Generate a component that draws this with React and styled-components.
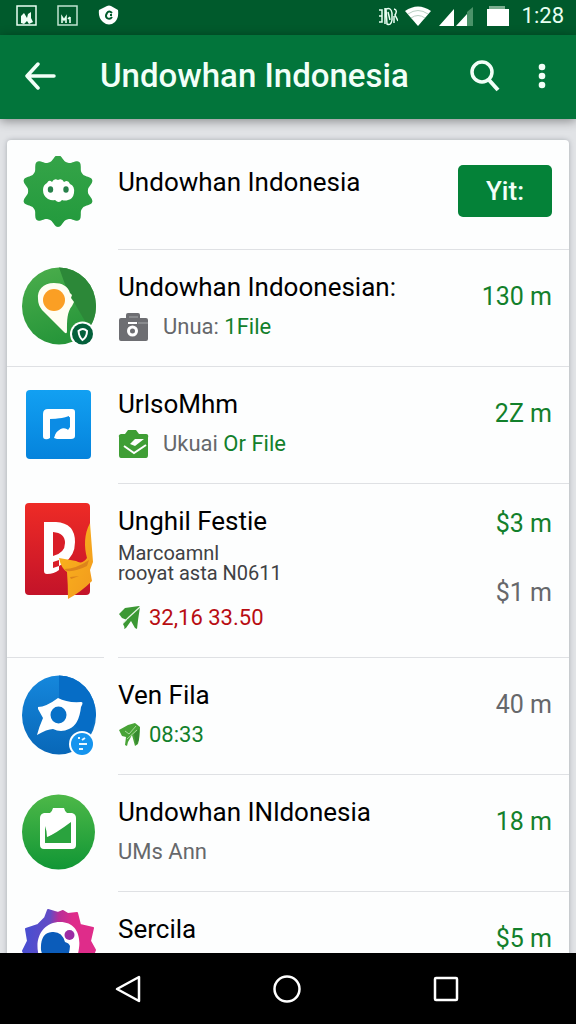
import React from 'react';
import styled, { createGlobalStyle } from 'styled-components';

const colors = {
  green: '#12802b',
  red: '#b80d12',
  gray: '#66686b',
  dark: '#3f4144',
};

// builds the outline of a cog with soft teeth
const gearPath = (cx, cy, rx, ry, depth, teeth) => {
  const points = [];
  for (let i = 0; i < 240; i++) {
    const a = (i / 240) * Math.PI * 2 - Math.PI / 2;
    const wave = Math.cos(a * teeth + (Math.PI / 2) * teeth);
    const k = 1 - depth * (1 - Math.pow((1 + wave) / 2, 1.4));
    points.push(
      `${(cx + rx * k * Math.cos(a)).toFixed(1)} ${(cy + ry * k * Math.sin(a)).toFixed(1)}`
    );
  }
  return `M${points.join('L')}Z`;
};

const GearIcon = () => (
  <AppIcon viewBox="0 0 80 100" aria-hidden="true">
    <defs>
      <linearGradient id="gear" x1="0" y1="0" x2="0" y2="1">
        <stop offset="0" stopColor="#35a448" />
        <stop offset="1" stopColor="#239a3d" />
      </linearGradient>
    </defs>
    <path d={gearPath(39, 35, 36, 36, 0.17, 10)} fill="url(#gear)" />
    <path
      d="M28 27 Q30 23 33 26 Q35 22 39 24 Q43 22 45 26 Q49 23 51 28 Q56 30 55 37 Q54 43 49 44 Q46 45 43 44 Q40 48 36 44 Q33 45 29 43 Q24 40 24 34 Q24 29 28 27Z"
      fill="#fff"
    />
    <ellipse cx="31.500" cy="33.500" rx="2.700" ry="3.300" fill="#27804a" />
    <ellipse cx="47" cy="33.500" rx="2.700" ry="3.300" fill="#27804a" />
  </AppIcon>
);

const PinIcon = () => (
  <AppIcon viewBox="0 0 80 100" aria-hidden="true">
    <defs>
      <linearGradient id="pin" x1="0" y1="0" x2="0.300" y2="1">
        <stop offset="0" stopColor="#4cae4c" />
        <stop offset="1" stopColor="#27963a" />
      </linearGradient>
    </defs>
    <ellipse cx="40" cy="40" rx="37" ry="38.500" fill="url(#pin)" />
    <path d="M40 1.500 A37 38.500 0 0 1 77 40 Q77 53 70 62 L48 24Z" fill="#2c8838" />
    <path
      d="M19 33 C18 24 24 17 35 17 C43 17 49 20 51 27 L53 29 L52 32 L55 36 L53 40 C48 46 48 54 48 65 Q48 69 45 66 L23 44 Q19 39 19 33Z"
      fill="#fffef2"
    />
    <circle cx="35" cy="34" r="11" fill="#fb9f24" />
    <circle cx="63.500" cy="68" r="12.500" fill="#fff" />
    <circle cx="63.500" cy="68" r="10.500" fill="#04603b" />
    <path
      d="M59.500 65 Q64 61 68 65 Q68 71 63.500 74 Q60 71 59.500 65Z"
      fill="none"
      stroke="#fff"
      strokeWidth="2"
    />
  </AppIcon>
);

const MusicIcon = () => (
  <AppIcon viewBox="0 0 80 100" aria-hidden="true">
    <defs>
      <linearGradient id="music" x1="0" y1="0" x2="0" y2="1">
        <stop offset="0" stopColor="#12a0f2" />
        <stop offset="1" stopColor="#0583dc" />
      </linearGradient>
    </defs>
    <rect x="7" y="7" width="65" height="69" rx="4" fill="url(#music)" />
    <path
      d="M29 26 H53 Q56 26 56 29 V53 Q56 56 52 56 H38 L35 55 Q37 47 43 45 Q47 44 49 47 L51 44 V34 Q43 36 31 36 L31 55 Q28 57 26 56 Q24 56 24 53 V31 Q24 26 29 26Z"
      fill="#fff"
    />
    <path d="M31 36 Q43 36 50 33 V44 L48 46 Q42 43 36 51 L34 55 H31Z" fill="#0b8ce5" />
  </AppIcon>
);

const CardIcon = () => (
  <AppIcon viewBox="0 0 80 100" aria-hidden="true">
    <defs>
      <linearGradient id="card" x1="0" y1="0" x2="0" y2="1">
        <stop offset="0" stopColor="#ee2b26" />
        <stop offset="1" stopColor="#c31329" />
      </linearGradient>
      <linearGradient id="cloth" x1="0" y1="0" x2="1" y2="1">
        <stop offset="0" stopColor="#fbb71d" />
        <stop offset="1" stopColor="#f29a1d" />
      </linearGradient>
    </defs>
    <rect x="6" y="3" width="65" height="92" rx="4" fill="url(#card)" />
    <path
      d="M25 22 H37 Q56 23 56 42 Q56 56 45 63 L40 66 V70 Q35 74 28 74 Q25 74 25 71Z"
      fill="#fff"
    />
    <path d="M34 32 Q46 33 46 43 Q46 53 34 56Z M34 62 L40 60 V66 L34 68Z" fill="#d91e28" />
    <path
      d="M71 23 C65 34 65 47 68 58 Q63 65 57 61 L40 58 Q42 68 48 72 Q49 85 49 99 Q62 92 73 81 L71 70 L74 62 Z"
      fill="url(#cloth)"
    />
    <path
      d="M45 69 Q57 69 70 60 L68 66 Q56 72 48 71Z M51 77 L60 76 L52 79Z"
      fill="#dd841b"
    />
  </AppIcon>
);

const StarIcon = () => (
  <AppIcon viewBox="0 0 80 100" aria-hidden="true">
    <defs>
      <linearGradient id="star" x1="0" y1="0" x2="0" y2="1">
        <stop offset="0" stopColor="#1587dc" />
        <stop offset="1" stopColor="#0867b8" />
      </linearGradient>
    </defs>
    <ellipse cx="40" cy="41" rx="37" ry="39.500" fill="url(#star)" />
    <path d="M40 1.500 A37 39.500 0 0 1 77 41 L70 62 L40 41Z" fill="#066dc6" />
    <path
      d="M19 33 Q27 33 39 24 Q48 29 62 28 Q65 28 62 33 Q60 51 50 55 Q42 59 34 55 Q28 55 18 61 Q20 53 24 44 L19 35Z"
      fill="#fff"
    />
    <ellipse cx="39.500" cy="41" rx="8" ry="8.500" fill="#0871c8" />
    <circle cx="63" cy="70" r="13" fill="#fff" />
    <circle cx="63" cy="70" r="11" fill="#1594ee" />
    <path
      d="M59 64 h2 m2 2 l3 -2 M60 70 h8 M60 75 h4"
      stroke="#e9f7ff"
      strokeWidth="2"
      fill="none"
    />
  </AppIcon>
);

const ClipboardIcon = () => (
  <AppIcon viewBox="0 0 80 100" aria-hidden="true">
    <defs>
      <linearGradient id="clip" x1="0" y1="0" x2="0" y2="1">
        <stop offset="0" stopColor="#4db848" />
        <stop offset="1" stopColor="#119635" />
      </linearGradient>
    </defs>
    <ellipse cx="39.500" cy="41" rx="36.500" ry="37.500" fill="url(#clip)" />
    <path
      d="M31 22 Q33 21 34 17 H45 Q46 21 48 22 H53 Q57 23 57 27 V54 Q57 58 53 58 H25 Q21 58 21 54 V27 Q21 23 25 22Z"
      fill="#fff"
    />
    <path d="M26 35 Q28 40 28 46 Q36 43 52 31 V52 H26Z" fill="#2aa33e" />
    <path d="M27 36 Q30 46 28 46 L38 40 L30 32Z" fill="#fff" />
  </AppIcon>
);

const OrbitIcon = () => (
  <AppIcon viewBox="0 0 80 100" aria-hidden="true">
    <defs>
      <linearGradient id="orbit" x1="0" y1="0" x2="1" y2="0.100">
        <stop offset="0.100" stopColor="#4b4ed0" />
        <stop offset="0.380" stopColor="#634bc5" />
        <stop offset="0.500" stopColor="#b72e98" />
        <stop offset="0.700" stopColor="#df2c8a" />
      </linearGradient>
    </defs>
    <path
      d="M29 2 L39 5 L44 3 L49 6 L58 5 L61 17 L74 20 L71 33 L76 42 L73 50 L74 65 L61 66 L56 78 L45 74 L36 80 L28 74 L17 75 L15 65 L5 62 L8 51 L4 43 L9 33 L7 21 L19 17 L26 10Z"
      fill="url(#orbit)"
      stroke="url(#orbit)"
      strokeWidth="2"
      strokeLinejoin="round"
    />
    <path
      d="M19 44 C16 27 26 14 41 14 C56 14 62 26 60 40 C58 57 49 64 38 63 C26 62 20 54 19 44Z"
      fill="#fff"
    />
    <path
      d="M22 42 Q21 25 33 24 Q43 23 46 34 Q50 35 51 38 Q50 55 38 57 Q25 56 22 42Z"
      fill="#0b5cba"
    />
    <circle cx="50.500" cy="27" r="5" fill="#9b2ca4" />
  </AppIcon>
);

const CaseIcon = () => (
  <SmallIcon viewBox="0 0 31 30" aria-hidden="true">
    <path
      d="M3 6 H8 V3 Q8 1 10 1 H20 Q22 1 22 3 V6 H28 Q30 6 30 8 V27 Q30 29 28 29 H3 Q1 29 1 27 V8 Q1 6 3 6Z"
      fill="#6d6e72"
    />
    <path d="M11 4 H20 V6 H11Z M20 10 H30 V12 H20Z" fill="#898b8e" />
    <path d="M10 11 H19" stroke="#fff" strokeWidth="2" />
    <circle cx="14.500" cy="19" r="4" fill="none" stroke="#fff" strokeWidth="3" />
  </SmallIcon>
);

const CheckBagIcon = () => (
  <SmallIcon viewBox="0 0 31 30" aria-hidden="true">
    <path
      d="M3 5 L7 5 L10 1 H18 L21 5 H28 Q31 5 30 9 V26 Q30 29 28 29 H3 Q1 29 1 26 V8 Q0 6 3 5Z"
      fill="#3f9e35"
    />
    <path d="M6 17 L16 24 L28 16" stroke="#fff" strokeWidth="2" fill="none" />
    <path d="M12 15 L17 10 L26 10 L17 17Z" fill="#fff" />
  </SmallIcon>
);

const PlaneIcon = () => (
  <TinyIcon viewBox="0 0 23 26" aria-hidden="true">
    <path
      d="M1 9 L7 3 L21 1 L22 2 Q20 14 19 24 L17 23 L13 16 L8 23 L6 24 L9 15 L4 13Z"
      fill="#3c9834"
    />
    <path d="M22 2 L11 12 L5 18" stroke="#e9f6e7" strokeWidth="1.200" fill="none" />
    <path d="M5 19 L10 14 L12 15 L7 23Z" fill="#3c9834" />
  </TinyIcon>
);

const ClockPlaneIcon = () => (
  <TinyIcon viewBox="0 0 23 26" aria-hidden="true">
    <path
      d="M1 8 L10 3 L17 1 L22 5 Q22 15 20 22 L17 24 L14 13 L10 20 L9 24 L7 23 L8 15 L4 14Z"
      fill="#48a337"
    />
    <path d="M7 9 L11 12 L18 4 M19 8 L9 17" stroke="#a7d99c" strokeWidth="1" fill="none" />
    <path d="M16 12 L18 23 L21 18 L21 7Z" fill="#236f2b" opacity="0.500" />
  </TinyIcon>
);

const items = [
  {
    title: 'Undowhan Indonesia',
    icon: GearIcon,
    action: 'Yit:',
    first: true,
  },
  {
    title: 'Undowhan Indoonesian:',
    icon: PinIcon,
    badge: CaseIcon,
    sub: 'Unua:',
    link: '1File',
    values: [{ text: '130 m', color: 'green' }],
    line: 'full',
  },
  {
    title: 'UrlsoMhm',
    icon: MusicIcon,
    badge: CheckBagIcon,
    sub: 'Ukuai',
    link: 'Or File',
    values: [{ text: '2Z m', color: 'green' }],
  },
  {
    title: 'Unghil Festie',
    icon: CardIcon,
    notes: ['Marcoamnl', 'rooyat asta N0611'],
    mark: PlaneIcon,
    info: '32,16 33.50',
    infoColor: 'red',
    values: [
      { text: '$3 m', color: 'green' },
      { text: '$1 m', color: 'gray' },
    ],
    line: 'split',
  },
  {
    title: 'Ven Fila',
    icon: StarIcon,
    mark: ClockPlaneIcon,
    info: '08:33',
    infoColor: 'green',
    values: [{ text: '40 m', color: 'gray' }],
  },
  {
    title: 'Undowhan INldonesia',
    icon: ClipboardIcon,
    sub: 'UMs Ann',
    values: [{ text: '18 m', color: 'green' }],
  },
  {
    title: 'Sercila',
    icon: OrbitIcon,
    mark: PlaneIcon,
    values: [{ text: '$5 m', color: 'green' }],
  },
];

const ListItem = ({ item }) => {
  const Icon = item.icon;
  const Badge = item.badge;
  const Mark = item.mark;
  return (
    <Row>
      <IconCell $line={item.line}>
        <Icon />
      </IconCell>
      <Content>
        <Texts $first={item.first}>
          <Title>{item.title}</Title>
          {item.notes && (
            <Notes>
              {item.notes.map((note) => (
                <Note key={note}>{note}</Note>
              ))}
            </Notes>
          )}
          {item.sub && (
            <SubLine $gap={14}>
              {Badge && <Badge />}
              <span>
                {item.sub} {item.link && <FileLink href="#">{item.link}</FileLink>}
              </span>
            </SubLine>
          )}
          {Mark && (
            <SubLine $gap={8} $color={item.infoColor} $afterNotes={!!item.notes}>
              <Mark />
              {item.info && <Info>{item.info}</Info>}
            </SubLine>
          )}
        </Texts>
        {item.action && <ActionButton type="button">{item.action}</ActionButton>}
        {item.values && (
          <Values $pair={item.values.length > 1}>
            {item.values.map((value) => (
              <Value key={value.text} $color={value.color}>
                {value.text}
              </Value>
            ))}
          </Values>
        )}
      </Content>
    </Row>
  );
};

const App = () => {
  return (
    <>
      <GlobalStyle />
      <Page>
        <StatusBar>
          <StatusGroup $gap={20}>
            <svg width="21" height="21" viewBox="0 0 21 21" aria-hidden="true">
              <rect x="1" y="1" width="19" height="19" fill="none" stroke="#e8fff2" strokeWidth="1.500" />
              <path d="M5 18 V11 L8 8 L11 13 L12 9 L15 7 V13 L17 17 L13 19 L11 16 L8 19Z" fill="#f2fff8" />
            </svg>
            <svg width="21" height="21" viewBox="0 0 21 21" aria-hidden="true">
              <rect x="1" y="1" width="19" height="19" fill="none" stroke="#bfe3cf" strokeWidth="1.500" />
              <path d="M5 18 V12 L7 15 L9 12 V18 M13 12 V18 M11 14 L13 12" fill="none" stroke="#e8fff2" strokeWidth="1.600" />
            </svg>
            <svg width="21" height="21" viewBox="0 0 21 21" aria-hidden="true">
              <path d="M1 5 L9 1 Q11 0 13 1 L20 5 Q21 13 17 17 Q11 22 5 17 Q0 13 1 5Z" fill="#fff" />
              <path d="M14 8 Q11 5 9 8 Q7 11 9 13 Q12 15 14 12 M12 10 H14" fill="none" stroke="#005a2b" strokeWidth="2" />
            </svg>
          </StatusGroup>
          <StatusGroup $gap={6}>
            <svg width="20" height="22" viewBox="0 0 20 22" aria-hidden="true">
              <path
                d="M1 5 H4 V17 H1 M1 11 H4 M7 3 V19 M8 4 Q13 2 14 8 V15 Q13 21 9 19Z M10 7 L12 15 M16 4 Q20 5 17 10 L20 16 M16 11 V18"
                fill="none"
                stroke="#e8fff2"
                strokeWidth="1.500"
              />
            </svg>
            <svg width="28" height="22" viewBox="0 0 28 22" aria-hidden="true">
              <path d="M1 6 Q14 -3 27 6 L14 21Z" fill="#fff" />
              <path d="M4 9 Q14 2 24 9 M7 13 Q14 8 21 13" fill="none" stroke="#b8cfc2" strokeWidth="1" />
            </svg>
            <svg width="36" height="22" viewBox="0 0 36 22" aria-hidden="true">
              <path d="M1 21 L16 4 V21Z M18 21 L29 9 V21Z" fill="#fff" />
              <path d="M29 7 L35 2 V21 H29Z" fill="#4b9369" />
            </svg>
            <Battery viewBox="0 0 24 22" aria-hidden="true">
              <path d="M3 1 H19 V4 H23 V8 H1 V4 H3Z" fill="#7cae90" />
              <rect x="1" y="4" width="22" height="17" fill="#fff" />
            </Battery>
            <Clock>1:28</Clock>
          </StatusGroup>
        </StatusBar>
        <AppBar>
          <IconButton type="button" aria-label="Back">
            <svg width="32" height="28" viewBox="0 0 32 28">
              <path d="M14 2 L3 14 L14 26 M3 14 H30" fill="none" stroke="#f2fff8" strokeWidth="3.500" strokeLinecap="round" strokeLinejoin="round" />
            </svg>
          </IconButton>
          <BarTitle>Undowhan Indonesia</BarTitle>
          <IconButton type="button" aria-label="Search">
            <svg width="30" height="32" viewBox="0 0 30 32">
              <circle cx="12" cy="12" r="10" fill="none" stroke="#f2fff8" strokeWidth="3.500" />
              <path d="M19 20 L28 30" stroke="#f2fff8" strokeWidth="4" />
            </svg>
          </IconButton>
          <IconButton type="button" aria-label="More options">
            <svg width="8" height="26" viewBox="0 0 8 26">
              <circle cx="4" cy="4" r="3.300" fill="#f2fff8" />
              <circle cx="4" cy="13" r="3.300" fill="#f2fff8" />
              <circle cx="4" cy="22" r="3.300" fill="#f2fff8" />
            </svg>
          </IconButton>
        </AppBar>
        <Main>
          <Card>
            {items.map((item) => (
              <ListItem key={item.title} item={item} />
            ))}
          </Card>
        </Main>
        <NavBar>
          <IconButton type="button" aria-label="Navigate back">
            <svg width="26" height="28" viewBox="0 0 26 28">
              <path d="M2 14 L24 2 V26Z" fill="none" stroke="#fff" strokeWidth="2.500" strokeLinejoin="round" />
            </svg>
          </IconButton>
          <IconButton type="button" aria-label="Home">
            <svg width="28" height="28" viewBox="0 0 28 28">
              <circle cx="14" cy="14" r="12.500" fill="none" stroke="#fff" strokeWidth="2.500" />
            </svg>
          </IconButton>
          <IconButton type="button" aria-label="Recent apps">
            <svg width="28" height="26" viewBox="0 0 28 26">
              <rect x="2" y="2" width="22" height="22" rx="1" fill="none" stroke="#fff" strokeWidth="2.500" />
            </svg>
          </IconButton>
        </NavBar>
      </Page>
    </>
  );
};

const GlobalStyle = createGlobalStyle`
  * {
    box-sizing: border-box;
  }
  body {
    margin: 0;
    font-family: Roboto, 'Liberation Sans', sans-serif;
  }
  button {
    font-family: inherit;
  }
`;

const Page = styled.div`
  display: flex;
  flex-direction: column;
  height: 100vh;
  overflow: hidden;
  background: #e1e3e6;
`;

const StatusBar = styled.div`
  display: flex;
  justify-content: space-between;
  align-items: center;
  flex: none;
  height: 35px;
  padding: 0 12px 4px 16px;
  background: #005a2c;
`;

const StatusGroup = styled.div`
  display: flex;
  align-items: center;
  gap: ${(props) => props.$gap}px;
`;

const Battery = styled.svg`
  width: 24px;
  height: 22px;
  margin: 0 6px;
`;

const Clock = styled.span`
  font-size: 22px;
  line-height: 28px;
  color: #e8fff2;
`;

const AppBar = styled.header`
  display: flex;
  align-items: center;
  flex: none;
  gap: 38px;
  height: 84px;
  padding: 0 30px 2px 24px;
  background: #02753b;
  box-shadow: 0 2px 10px rgba(0, 0, 0, 0.4);
  z-index: 1;
`;

const IconButton = styled.button`
  display: flex;
  align-items: center;
  justify-content: center;
  padding: 0;
  border: none;
  background: none;
  cursor: pointer;
`;

const BarTitle = styled.h1`
  flex: 1;
  margin: 0 0 0 6px;
  font-size: 33px;
  line-height: 40px;
  font-weight: 500;
  white-space: nowrap;
  color: #f2fff8;
`;

const Main = styled.main`
  flex: 1;
  min-height: 0;
  overflow: hidden;
  padding: 21px 7px 0;
`;

const Card = styled.ul`
  margin: 0;
  padding: 0;
  list-style: none;
  border-radius: 4px;
  background: #fdfefe;
  box-shadow: 0 0 5px rgba(60, 70, 80, 0.35);
`;

const Row = styled.li`
  display: flex;
`;

const IconCell = styled.div`
  flex: none;
  width: ${(props) => (props.$line === 'full' ? '111px' : '97px')};
  margin-right: ${(props) => (props.$line === 'full' ? '0' : '14px')};
  padding: 16px 0 0 12px;
  border-bottom: 1px solid ${(props) => (props.$line ? '#dfe1e4' : 'transparent')};
`;

const AppIcon = styled.svg`
  display: block;
  width: 80px;
  height: 100px;
  margin-bottom: -20px;
`;

const Content = styled.div`
  display: flex;
  flex: 1;
  justify-content: space-between;
  min-width: 0;
  padding-right: 17px;
  border-bottom: 1px solid #dfe1e4;
`;

const Texts = styled.div`
  padding: ${(props) => (props.$first ? '24px 0 49px' : '19px 0 23px')};
  white-space: nowrap;
`;

const Title = styled.h2`
  margin: 0;
  font-size: 26px;
  line-height: 36px;
  font-weight: 400;
  color: #000;
`;

const Notes = styled.div`
  padding-top: 4px;
`;

const Note = styled.p`
  margin: 0;
  font-size: 20px;
  line-height: 20px;
  color: ${colors.dark};
`;

const SubLine = styled.div`
  display: flex;
  align-items: center;
  gap: ${(props) => props.$gap}px;
  height: 32px;
  margin-top: ${(props) => (props.$afterNotes ? '19px' : '6px')};
  font-size: 22px;
  line-height: 32px;
  color: ${(props) => colors[props.$color || 'gray']};
`;

const SmallIcon = styled.svg`
  flex: none;
  width: 31px;
  height: 30px;
`;

const TinyIcon = styled.svg`
  flex: none;
  width: 23px;
  height: 26px;
`;

const FileLink = styled.a`
  color: ${colors.green};
  text-decoration: none;
`;

const Info = styled.span`
  font-size: 22px;
`;

const ActionButton = styled.button`
  width: 94px;
  height: 52px;
  margin-top: 25px;
  padding: 0;
  border: none;
  border-radius: 5px;
  background: #048238;
  font-size: 26px;
  font-weight: 500;
  color: #f2fff8;
  cursor: pointer;
`;

const Values = styled.div`
  display: flex;
  flex-direction: column;
  gap: 37px;
  padding-top: ${(props) => (props.$pair ? '24px' : '31px')};
  text-align: right;
  white-space: nowrap;
`;

const Value = styled.span`
  font-size: 25px;
  line-height: 32px;
  color: ${(props) => colors[props.$color]};
`;

const NavBar = styled.nav`
  display: flex;
  align-items: center;
  justify-content: space-between;
  flex: none;
  height: 71px;
  padding: 0 20%;
  background: #000;
  z-index: 1;
`;

export default App;
